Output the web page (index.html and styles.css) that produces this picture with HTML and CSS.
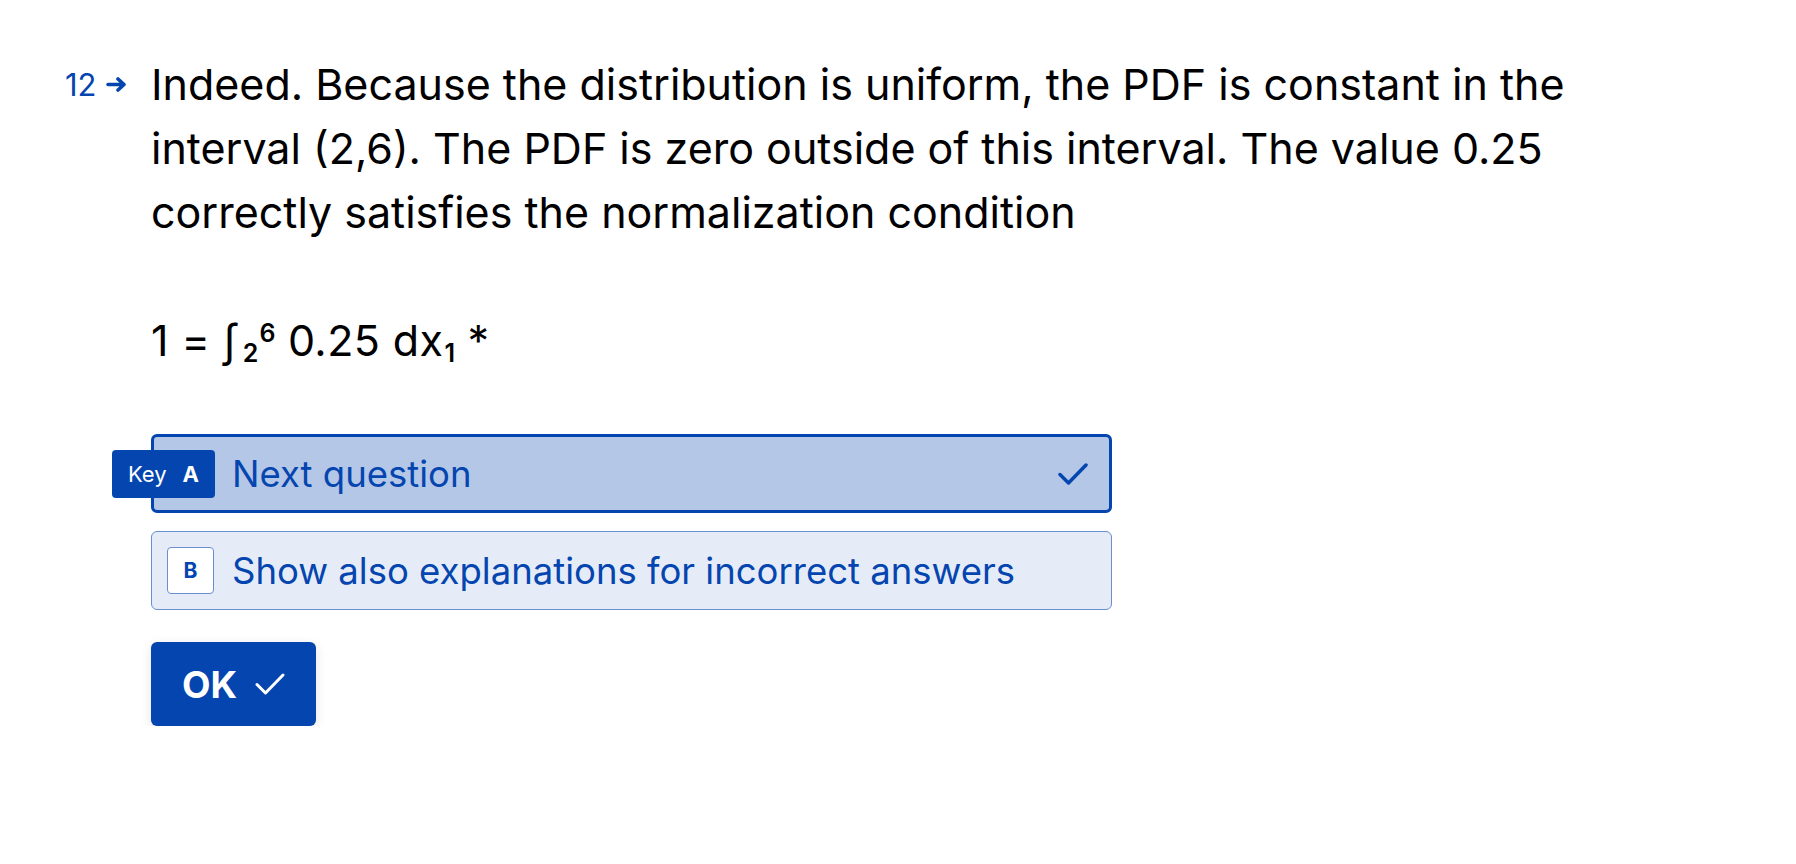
FILE: index.html
```html
<!DOCTYPE html>
<html lang="en">
<head>
<meta charset="utf-8">
<title>Question 12</title>
<link rel="stylesheet" href="styles.css">
</head>
<body>
<main class="page">
  <div class="qnum">
    <span class="qnum-text">12</span>
    <svg class="qnum-arrow" width="21" height="15" viewBox="0 0 21 15" aria-hidden="true">
      <path d="M2 7.5H18M12 2L18 7.5L12 13" fill="none" stroke="#0445af" stroke-width="3.6" stroke-linecap="round" stroke-linejoin="round"/>
    </svg>
  </div>
  <section class="content">
    <p class="qtext">Indeed. Because the distribution is uniform, the PDF is constant in the interval (2,6). The PDF is zero outside of this interval. The value 0.25 correctly satisfies the normalization condition</p>
    <p class="qtext math">1 = ∫<sub>2</sub><sup>6</sup> 0.25 dx<sub class="sub1">1</sub> *</p>

    <ul class="choices">
      <li class="choice selected">
        <span class="badge-slot">
          <span class="keyhint"><span class="keyhint-label">Key</span><b>A</b></span>
        </span>
        <span class="choice-text">Next question</span>
        <svg class="choice-check" width="30" height="24" viewBox="0 0 30 24" aria-hidden="true">
          <path d="M2 12.5L10.5 21L28 3" fill="none" stroke="#0445af" stroke-width="3.5" stroke-linecap="round" stroke-linejoin="round"/>
        </svg>
      </li>
      <li class="choice">
        <span class="badge-slot"><span class="badge">B</span></span>
        <span class="choice-text">Show also explanations for incorrect answers</span>
      </li>
    </ul>

    <button class="ok-btn" type="button">
      <span>OK</span>
      <svg width="30" height="24" viewBox="0 0 30 24" aria-hidden="true">
        <path d="M2 12.5L10.5 21L28 3" fill="none" stroke="#ffffff" stroke-width="3" stroke-linecap="round" stroke-linejoin="round"/>
      </svg>
    </button>
  </section>
</main>
</body>
</html>
```
FILE: styles.css
```css
* { box-sizing: border-box; }

html, body {
  margin: 0;
  padding: 0;
  background: #ffffff;
}

body {
  font-family: Inter, "Noto Sans", sans-serif;
  color: #000000;
}

.page {
  display: flex;
  align-items: flex-start;
  padding: 52px 0 0 65px;
}

.qnum {
  width: 86px;
  flex: 0 0 86px;
  height: 64px;
  display: flex;
  align-items: center;
  gap: 9px;
  color: #0445af;
  font-size: 31px;
  line-height: 1;
}

.qnum-arrow { display: block; }

.content {
  width: 1480px;
}

.qtext {
  margin: 0;
  font-size: 43px;
  line-height: 64px;
}

.math {
  margin-top: 64px;
  letter-spacing: 0.4px;
}

.math sub,
.math sup {
  font-size: 25px;
  font-weight: 600;
  line-height: 0;
  position: relative;
  vertical-align: baseline;
  letter-spacing: 0;
}

.math sub { top: 6px; margin-left: 4px; }
.math sup { top: -14px; margin-left: 1px; }
.math .sub1 { top: 6px; margin-left: 1px; }

.choices {
  list-style: none;
  margin: 62px 0 0;
  padding: 0;
  display: flex;
  flex-direction: column;
  gap: 18px;
  width: 961px;
}

.choice {
  display: flex;
  align-items: center;
  gap: 18px;
  padding: 15px;
  border: 1px solid #688fcf;
  border-radius: 6px;
  background: #e6ecf7;
  color: #0445af;
}

.choice.selected {
  padding: 13px;
  border: 3px solid #0445af;
  background: #b4c7e7;
}

.badge-slot {
  position: relative;
  width: 47px;
  height: 47px;
  flex: 0 0 47px;
}

.badge {
  display: flex;
  align-items: center;
  justify-content: center;
  width: 47px;
  height: 47px;
  border: 1px solid #688fcf;
  border-radius: 4px;
  background: #ffffff;
  color: #0445af;
  font-size: 21px;
  font-weight: 700;
}

.keyhint {
  position: absolute;
  top: 0;
  right: -1px;
  height: 48px;
  display: flex;
  align-items: center;
  gap: 16px;
  padding: 0 16px;
  border-radius: 4px;
  background: #0445af;
  color: #ffffff;
  font-size: 22px;
  white-space: nowrap;
}

.keyhint b { font-weight: 700; }

.choice-text {
  flex: 1;
  font-size: 36.5px;
  line-height: 1.2;
  padding-top: 3px;
}

.choice-check {
  margin-right: 8px;
  flex: 0 0 auto;
}

.ok-btn {
  margin-top: 32px;
  display: flex;
  align-items: center;
  gap: 18px;
  height: 84px;
  padding: 0 31px;
  border: none;
  border-radius: 6px;
  background: #0445af;
  color: #ffffff;
  font-family: Inter, "Noto Sans", sans-serif;
  font-size: 37px;
  font-weight: 700;
  box-shadow: 0 3px 12px rgba(0, 0, 0, 0.1);
  cursor: pointer;
}
```
